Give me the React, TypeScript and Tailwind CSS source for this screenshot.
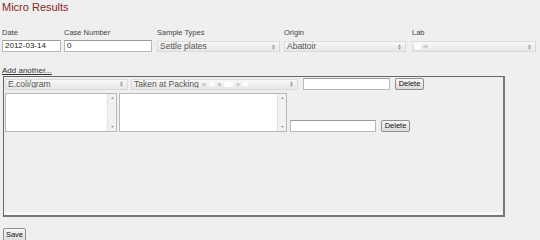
import React from "react";
import clsx from "clsx";

type BoxProps = {
  className?: string;
  children?: React.ReactNode;
};

function Arrows() {
  return (
    <svg width="3" height="6" viewBox="0 0 3 6" className="shrink-0">
      <polygon points="0,2.4 1.5,0.4 3,2.4" fill="#8a8a8a" />
      <polygon points="0,3.6 3,3.6 1.5,5.6" fill="#8a8a8a" />
    </svg>
  );
}

function Select({ className, children }: BoxProps) {
  return (
    <div
      className={clsx(
        "flex h-[11px] shrink-0 items-center justify-between border border-[#dadada] bg-gradient-to-b from-[#f8f8f8] to-[#e7e7e7] pl-[2px] pr-[4px] text-[8.5px] leading-none text-[#555]",
        className
      )}
    >
      <span className="flex items-center truncate">{children}</span>
      <Arrows />
    </div>
  );
}

function TextInput({ className, children }: BoxProps) {
  return (
    <div
      className={clsx(
        "flex h-[12px] shrink-0 items-center border border-[#b8b8b8] border-t-[#9c9c9c] bg-white pl-[2px] text-[8px] leading-none text-[#222]",
        className
      )}
    >
      {children}
    </div>
  );
}

function Button({ className, children }: BoxProps) {
  return (
    <div
      className={clsx(
        "flex h-[12px] shrink-0 items-center justify-center rounded-[2px] border border-[#8f8f8f] bg-gradient-to-b from-[#f7f7f7] to-[#dcdcdc] text-[7.5px] leading-none text-[#111]",
        className
      )}
    >
      {children}
    </div>
  );
}

function TextArea({ className }: BoxProps) {
  return (
    <div className={clsx("flex h-[39px] shrink-0 border border-[#b8b8b8] bg-white", className)}>
      <div className="flex-1" />
      <div className="flex w-[9px] flex-col items-center justify-between border-l border-[#e2e2e2] bg-[#f1f1f1] py-[3px]">
        <svg width="3" height="2" viewBox="0 0 3 2">
          <polygon points="0,2 1.5,0 3,2" fill="#9a9a9a" />
        </svg>
        <svg width="3" height="2" viewBox="0 0 3 2">
          <polygon points="0,0 3,0 1.5,2" fill="#9a9a9a" />
        </svg>
      </div>
    </div>
  );
}

function Field({ label, className, children }: BoxProps & { label: string }) {
  return (
    <div className={clsx("flex shrink-0 flex-col", className)}>
      <div className="h-[12px] text-[7.5px] leading-[10px] text-[#444]">{label}</div>
      {children}
    </div>
  );
}

function Smudge() {
  return (
    <span className="ml-[3px] flex items-center gap-[3px]">
      <span className="h-[3px] w-[4px] rounded-full bg-[#c9c9c9] blur-[0.5px]" />
      <span className="h-[4px] w-[6px] rounded-full bg-white blur-[0.5px]" />
      <span className="h-[3px] w-[3px] rounded-full bg-[#bdbdbd] blur-[0.5px]" />
      <span className="h-[5px] w-[9px] rounded-full bg-white blur-[0.5px]" />
      <span className="h-[3px] w-[4px] rounded-full bg-[#cfcfcf] blur-[0.5px]" />
      <span className="h-[4px] w-[5px] rounded-full bg-white blur-[0.5px]" />
    </span>
  );
}

export default function App() {
  return (
    <div
      className="h-[240px] w-[540px] overflow-hidden bg-[#efefef]"
      style={{ fontFamily: '"Liberation Sans", Arial, sans-serif' }}
    >
      <h1 className="pl-[2px] pt-[1px] text-[11px] leading-[13px] text-[#8a1f1f]">Micro Results</h1>

      {/* header fields */}
      <div className="mt-[14px] flex pl-[2px]">
        <Field label="Date" className="w-[59px]">
          <TextInput className="w-[59px]">2012-03-14</TextInput>
        </Field>
        <Field label="Case Number" className="ml-[3px] w-[88px]">
          <TextInput className="w-[88px]">0</TextInput>
        </Field>
        <Field label="Sample Types" className="ml-[5px] w-[123px]">
          <Select className="mt-[1px] w-[123px]">Settle plates</Select>
        </Field>
        <Field label="Origin" className="ml-[4px] w-[122px]">
          <Select className="mt-[1px] w-[122px]">Abattoir</Select>
        </Field>
        <Field label="Lab" className="ml-[6px] w-[124px]">
          <Select className="mt-[1px] w-[124px]">
            <span className="h-[5px] w-[6px] bg-white blur-[0.4px]" />
            <span className="ml-[2px] h-[3px] w-[5px] rounded-full bg-[#cfcfcf] blur-[0.5px]" />
          </Select>
        </Field>
      </div>

      <div className="mt-[14px] pl-[2px] text-[8px] leading-[10px] text-[#333] underline">Add another...</div>

      {/* results box */}
      <div className="ml-[3px] h-[141px] w-[502px] border border-[#666] border-b-[2px] border-r-[2px] border-b-[#777] border-r-[#777] px-[1px] pt-[1px] shadow-[inset_0_-3px_0_#f8f8f8]">
        <div className="flex items-center">
          <Select className="w-[123px]">E.coli/gram</Select>
          <Select className="ml-[3px] w-[167px]">
            Taken at Packing
            <Smudge />
          </Select>
          <TextInput className="ml-[5px] w-[87px]" />
          <Button className="ml-[5px] w-[29px]">Delete</Button>
        </div>
        <div className="mt-[3px] flex items-end">
          <TextArea className="w-[112px]" />
          <TextArea className="ml-[2px] w-[168px]" />
          <TextInput className="mb-[0px] ml-[3px] w-[86px]" />
          <Button className="mb-[0px] ml-[5px] w-[29px]">Delete</Button>
        </div>
      </div>

      <Button className="ml-[3px] mt-[11px] h-[14px] w-[23px]">Save</Button>
    </div>
  );
}
